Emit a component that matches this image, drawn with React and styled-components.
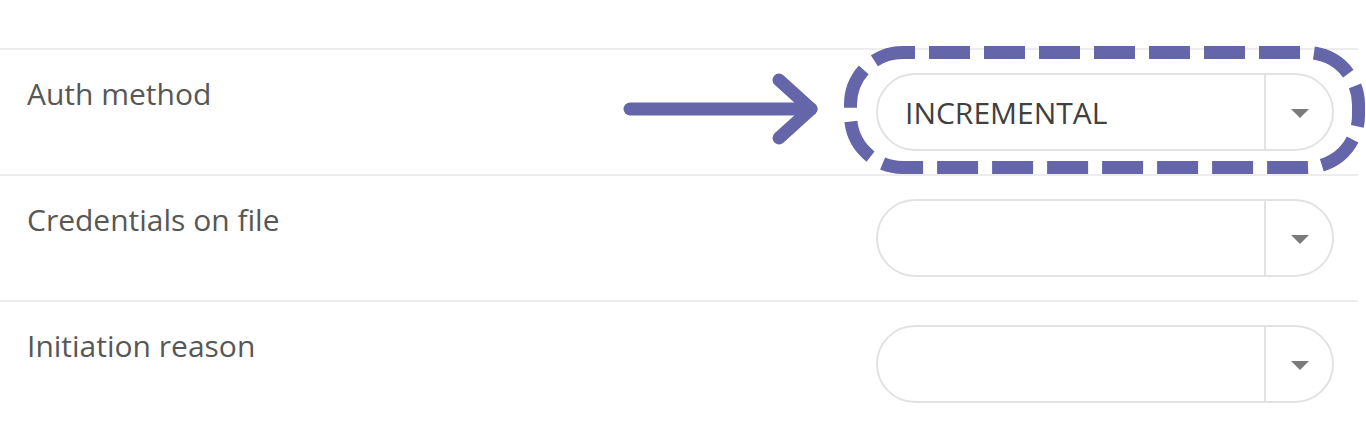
import React from 'react';
import styled, { createGlobalStyle } from 'styled-components';

const GlobalStyle = createGlobalStyle`
  html, body {
    margin: 0;
    padding: 0;
    background: #ffffff;
  }
  body {
    font-family: 'Open Sans', 'Lato', sans-serif;
  }
`;

const StyledForm = styled.div`
  width: 1358px;
  margin-top: 48px;
`;

const StyledRow = styled.div`
  height: 126px;
  box-sizing: border-box;
  border-top: 2px solid #ededed;
  display: flex;
  justify-content: space-between;
  align-items: flex-start;
  padding: 23px 24px 0 27px;
`;

const StyledLabel = styled.span`
  margin-top: 1px;
  font-size: 30px;
  line-height: 40px;
  color: #575757;
`;

const StyledSelectWrap = styled.div`
  position: relative;
`;

const StyledSelect = styled.div`
  width: 458px;
  height: 78px;
  box-sizing: border-box;
  border: 2px solid #e2e2e2;
  border-radius: 39px;
  display: flex;
  align-items: stretch;
  background: #fff;
`;

const StyledValue = styled.div`
  flex: 1;
  display: flex;
  align-items: center;
  padding-left: 27px;
  font-size: 30px;
  color: #404040;
`;

const StyledToggle = styled.div`
  width: 66px;
  border-left: 2px solid #e2e2e2;
  display: flex;
  align-items: center;
  justify-content: center;
`;

const StyledCaret = styled.span`
  width: 0;
  height: 0;
  border-left: 9px solid transparent;
  border-right: 9px solid transparent;
  border-top: 9px solid #7b7b7b;
  margin-left: 2px;
  margin-top: 2px;
`;

const StyledHighlight = styled.svg`
  position: absolute;
  left: -32px;
  top: -27px;
  overflow: visible;
  pointer-events: none;
`;

const StyledArrow = styled.svg`
  position: absolute;
  left: -258px;
  top: -1px;
  overflow: visible;
  pointer-events: none;
`;

const ACCENT = '#6466a9';

const Highlight = () => (
  <StyledHighlight width="521" height="128" viewBox="0 0 521 128">
    <rect
      x="6.5"
      y="6.5"
      width="508"
      height="115"
      rx="52"
      fill="none"
      stroke={ACCENT}
      strokeWidth="13"
      strokeDasharray="41 14"
      strokeDashoffset="28.5"
    />
  </StyledHighlight>
);

const Arrow = () => (
  <StyledArrow width="210" height="80" viewBox="0 0 210 80">
    <g fill="none" stroke={ACCENT} strokeWidth="13" strokeLinecap="round" strokeLinejoin="round">
      <line x1="12" y1="37" x2="193" y2="37" />
      <polyline points="161,8 193,37 161,66" />
    </g>
  </StyledArrow>
);

const Select = ({ value, highlighted }) => (
  <StyledSelectWrap>
    {highlighted && <Arrow />}
    <StyledSelect>
      <StyledValue>{value}</StyledValue>
      <StyledToggle>
        <StyledCaret />
      </StyledToggle>
    </StyledSelect>
    {highlighted && <Highlight />}
  </StyledSelectWrap>
);

const fields = [
  { label: 'Auth method', value: 'INCREMENTAL', highlighted: true },
  { label: 'Credentials on file', value: '' },
  { label: 'Initiation reason', value: '' },
];

const App = () => (
  <>
    <GlobalStyle />
    <StyledForm>
      {fields.map((field) => (
        <StyledRow key={field.label}>
          <StyledLabel>{field.label}</StyledLabel>
          <Select value={field.value} highlighted={field.highlighted} />
        </StyledRow>
      ))}
    </StyledForm>
  </>
);

export default App;
